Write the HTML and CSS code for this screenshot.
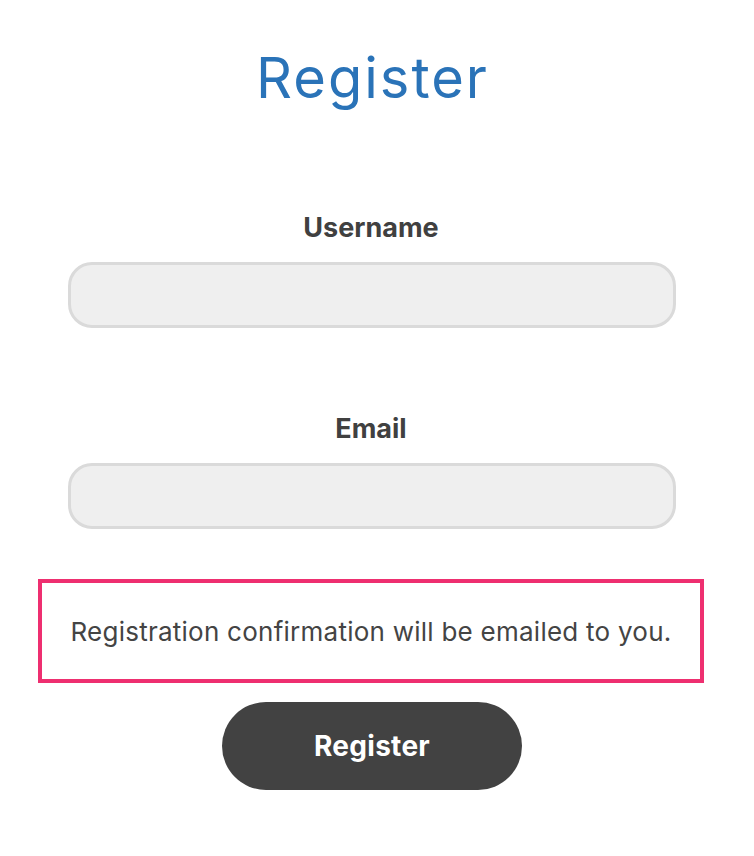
FILE: index.html
```html
<!DOCTYPE html>
<html lang="en">
<head>
<meta charset="utf-8">
<title>Register</title>
<link rel="stylesheet" href="styles.css">
</head>
<body>
<main class="page">
  <h1 class="title">Register</h1>
  <form class="form">
    <div class="field">
      <label class="label" for="username">Username</label>
      <input class="input" id="username" type="text">
    </div>
    <div class="field field-email">
      <label class="label" for="email">Email</label>
      <input class="input" id="email" type="email">
    </div>
    <p class="notice">Registration confirmation will be emailed to you.</p>
    <div class="actions">
      <button class="button" type="button">Register</button>
    </div>
  </form>
</main>
</body>
</html>
```

FILE: styles.css
```css
html, body {
  margin: 0;
  padding: 0;
  background: #ffffff;
}
body {
  font-family: Inter, "Noto Sans", "Liberation Sans", sans-serif;
  color: #444444;
}
.page {
  width: 666px;
  margin-left: 38px;
  display: flex;
  flex-direction: column;
  align-items: stretch;
}
.title {
  margin: 46px 0 0 0;
  font-size: 56px;
  line-height: 64px;
  font-weight: 400;
  color: #2a73b8;
  text-align: center;
  letter-spacing: 2px;
  padding-left: 3px;
}
.form {
  display: flex;
  flex-direction: column;
  margin-top: 102px;
}
.field {
  display: flex;
  flex-direction: column;
  align-items: center;
  gap: 18px;
}
.field-email {
  margin-top: 85px;
}
.label {
  font-size: 27px;
  line-height: 32px;
  font-weight: 700;
  color: #404040;
}
.input {
  box-sizing: border-box;
  width: 608px;
  height: 66px;
  margin-left: 2px;
  border: 3px solid #dadada;
  border-radius: 24px;
  background: #efefef;
  font: inherit;
  outline: none;
}
.notice {
  margin: 50px 0 0 0;
  box-sizing: border-box;
  height: 104px;
  border: 4px solid #ee2f70;
  display: flex;
  align-items: center;
  justify-content: center;
  font-size: 26px;
  letter-spacing: 0.25px;
  color: #444444;
}
.actions {
  display: flex;
  justify-content: center;
  margin-top: 19px;
}
.button {
  width: 300px;
  height: 88px;
  border: none;
  border-radius: 44px;
  background: #424242;
  color: #ffffff;
  font-family: inherit;
  font-size: 28px;
  font-weight: 700;
  letter-spacing: 0.3px;
  margin-left: 2px;
}
```
